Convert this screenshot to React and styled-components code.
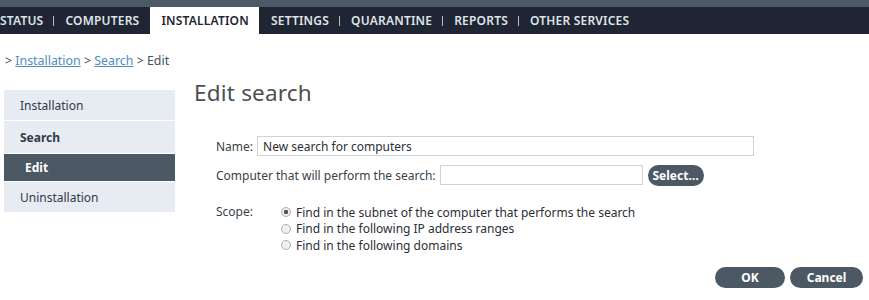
import React from "react";
import styled, { createGlobalStyle } from "styled-components";

const GlobalStyle = createGlobalStyle`
	body {
		margin: 0;
		background: #fff;
		font-family: "Noto Sans", "Liberation Sans", sans-serif;
		font-size: 13px;
		color: #2b2f36;
	}
`;

const tabs = ["STATUS", "COMPUTERS", "INSTALLATION", "SETTINGS", "QUARANTINE", "REPORTS", "OTHER SERVICES"];
const menu = [
	{ label: "Installation" },
	{ label: "Search", bold: true },
	{ label: "Edit", active: true },
	{ label: "Uninstallation" },
];
const scopes = [
	"Find in the subnet of the computer that performs the search",
	"Find in the following IP address ranges",
	"Find in the following domains",
];

export default function App() {
	return (
		<Page>
			<GlobalStyle />
			<TopStrip />
			<NavBar>
				{tabs.map((t, i) => {
					const active = t === "INSTALLATION";
					const prevActive = tabs[i - 1] === "INSTALLATION";
					return (
						<React.Fragment key={t}>
							{i > 0 && <Sep $hidden={active || prevActive} />}
							<Tab $active={active}>{t}</Tab>
						</React.Fragment>
					);
				})}
			</NavBar>
			<Crumbs>
				&gt; <CrumbLink>Installation</CrumbLink> &gt; <CrumbLink>Search</CrumbLink> &gt; Edit
			</Crumbs>
			<Main>
				<Side>
					{menu.map((m) => (
						<SideItem key={m.label} $active={m.active} $bold={m.bold}>
							{m.label}
						</SideItem>
					))}
				</Side>
				<Content>
					<Title>Edit search</Title>
					<Form>
						<Row>
							<Label>Name:</Label>
							<TextBox $width={497} defaultValue="New search for computers" />
						</Row>
						<Row>
							<Label>Computer that will perform the search:</Label>
							<TextBox $width={203} />
							<PillButton $width={56}>Select…</PillButton>
						</Row>
						<ScopeRow>
							<ScopeLabel>Scope:</ScopeLabel>
							<Options>
								{scopes.map((s, i) => (
									<Option key={s}>
										<Radio $checked={i === 0} />
										{s}
									</Option>
								))}
							</Options>
						</ScopeRow>
					</Form>
					<Actions>
						<PillButton $width={70}>OK</PillButton>
						<PillButton $width={73}>Cancel</PillButton>
					</Actions>
				</Content>
			</Main>
		</Page>
	);
}

const Page = styled.div`
	width: 869px;
	height: 300px;
	overflow: hidden;
`;

const TopStrip = styled.div`
	height: 7px;
	background: #4c5966;
`;

const NavBar = styled.div`
	display: flex;
	align-items: center;
	height: 27px;
	background: #1f2532;
	margin-left: -11px;
`;

const Tab = styled.div`
	height: 100%;
	display: flex;
	align-items: center;
	padding: 0 10px 0 11px;
	font-size: 12px;
	font-weight: 600;
	letter-spacing: 0.2px;
	color: ${(p) => (p.$active ? "#1f2532" : "#dfe4ea")};
	background: ${(p) => (p.$active ? "#fff" : "transparent")};
`;

const Sep = styled.span`
	width: 1px;
	height: 10px;
	background: ${(p) => (p.$hidden ? "transparent" : "#b9c0c9")};
`;

const Crumbs = styled.div`
	padding: 18px 0 0 5px;
	height: 20px;
	font-size: 12.4px;
	color: #4a4f56;
`;

const CrumbLink = styled.a`
	color: #4f8cc4;
	text-decoration: underline;
`;

const Main = styled.div`
	display: flex;
	padding: 13px 0 0 4px;
`;

const Side = styled.div`
	width: 171px;
	display: flex;
	flex-direction: column;
	gap: 1px;
	flex-shrink: 0;
	margin-top: 5px;
`;

const SideItem = styled.div`
	display: flex;
	align-items: center;
	height: ${(p) => (p.$active ? "27px" : p.$bold ? "32px" : "30px")};
	padding-left: ${(p) => (p.$active ? "21px" : "16px")};
	background: ${(p) => (p.$active ? "#4c5864" : "#e7ecf3")};
	color: ${(p) => (p.$active ? "#fff" : "#2f3a4a")};
	font-weight: ${(p) => (p.$active || p.$bold ? 700 : 400)};
	font-size: 12px;
`;

const Content = styled.div`
	flex: 1;
	padding-left: 19px;
`;

const Title = styled.h1`
	margin: -8px 0 0;
	font-size: 22.5px;
	font-weight: 400;
	color: #4a4f55;
	line-height: 32px;
	letter-spacing: 0.2px;
`;

const Form = styled.div`
	display: flex;
	flex-direction: column;
	gap: 9px;
	padding: 27px 0 0 22px;
`;

const Row = styled.div`
	display: flex;
	align-items: center;
	gap: 4px;
	height: 20px;
`;

const Label = styled.span`
	color: #3a3f46;
	font-size: 12px;
`;

const TextBox = styled.input`
	box-sizing: border-box;
	width: ${(p) => p.$width}px;
	height: 20px;
	border: 1px solid #cfd2d6;
	padding: 0 5px;
	font-family: inherit;
	font-size: 12px;
	color: #2b2f36;
	outline: none;
`;

const PillButton = styled.button`
	width: ${(p) => p.$width}px;
	height: 21px;
	border: none;
	border-radius: 11px;
	background: #4c5864;
	color: #fff;
	font-family: inherit;
	font-size: 12px;
	font-weight: 700;
	padding: 0;
	margin-left: 1px;
`;

const ScopeRow = styled.div`
	display: flex;
	margin-top: 10px;
`;

const ScopeLabel = styled.span`
	width: 65px;
	font-size: 12px;
	color: #3a3f46;
	line-height: 16px;
`;

const Options = styled.div`
	display: flex;
	flex-direction: column;
	gap: 0.5px;
`;

const Option = styled.label`
	display: flex;
	align-items: center;
	gap: 5px;
	font-size: 12px;
	color: #2b2f36;
	height: 16px;
`;

const Radio = styled.span`
	box-sizing: border-box;
	width: 10px;
	height: 10px;
	border-radius: 50%;
	border: 1px solid #a9adb2;
	background: ${(p) => (p.$checked ? "radial-gradient(circle, #555 0 2px, #eee 2.5px)" : "#f1f1f1")};
`;

const Actions = styled.div`
	display: flex;
	justify-content: flex-end;
	gap: 4px;
	padding: 14px 6px 0 0;
`;
